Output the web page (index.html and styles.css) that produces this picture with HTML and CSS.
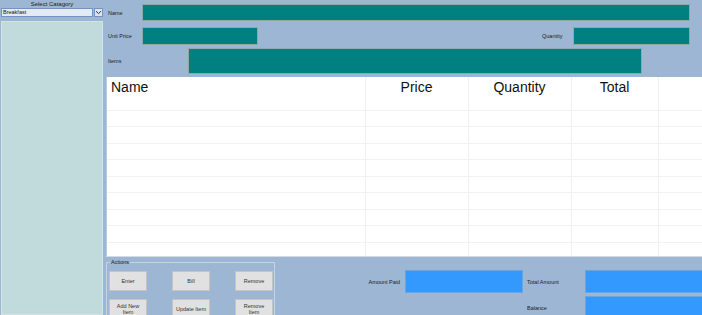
FILE: index.html
```html
<!DOCTYPE html>
<html>
<head>
  <title>Billing</title>
  <link rel="stylesheet" href="styles.css">
</head>
<body>
  <div class="app">
    <div class="side">
      <div class="side-title">Select Catagory</div>
      <div class="combo">
        <div class="combo-text">Breakfast</div>
        <div class="combo-btn">
          <svg width="7" height="5" viewBox="0 0 7 5"><path d="M1 1.2 L3.5 3.6 L6 1.2" fill="none" stroke="#333" stroke-width="1"/></svg>
        </div>
      </div>
      <div class="listbox"></div>
    </div>

    <div class="main">
      <div class="form-row row-name">
        <label class="lbl lbl-short">Name</label>
        <div class="tbox tbox-name"></div>
      </div>
      <div class="form-row row-price">
        <label class="lbl lbl-short">Unit Price</label>
        <div class="tbox tbox-price"></div>
        <label class="lbl lbl-qty">Quantity</label>
        <div class="tbox tbox-qty"></div>
      </div>
      <div class="form-row row-items">
        <label class="lbl lbl-items">Items</label>
        <div class="tbox tbox-items"></div>
      </div>

      <div class="grid-wrap">
        <table class="grid">
          <tr class="head"><th class="c-name">Name</th><th class="c-price">Price</th><th class="c-qty">Quantity</th><th class="c-total">Total</th><th class="c-rest"></th></tr>
          <tr><td></td><td></td><td></td><td></td><td></td></tr>
          <tr><td></td><td></td><td></td><td></td><td></td></tr>
          <tr><td></td><td></td><td></td><td></td><td></td></tr>
          <tr><td></td><td></td><td></td><td></td><td></td></tr>
          <tr><td></td><td></td><td></td><td></td><td></td></tr>
          <tr><td></td><td></td><td></td><td></td><td></td></tr>
          <tr><td></td><td></td><td></td><td></td><td></td></tr>
          <tr><td></td><td></td><td></td><td></td><td></td></tr>
          <tr><td></td><td></td><td></td><td></td><td></td></tr>
        </table>
      </div>

      <div class="bottom">
        <fieldset class="actions">
          <legend>Actions</legend>
          <div class="btn-grid">
            <button class="btn">Enter</button>
            <button class="btn">Bill</button>
            <button class="btn">Remove</button>
            <button class="btn btn-tall">Add New<br>Item</button>
            <button class="btn btn-tall">Update Item</button>
            <button class="btn btn-tall">Remove<br>Item</button>
          </div>
        </fieldset>
        <div class="pay">
          <label class="lbl pay-lbl-right">Amount Paid</label>
          <div class="bbox"></div>
          <label class="lbl">Total Amount</label>
          <div class="bbox"></div>
          <div></div>
          <div></div>
          <label class="lbl">Balance</label>
          <div class="bbox"></div>
        </div>
      </div>
    </div>
  </div>
</body>
</html>
```

FILE: styles.css
```css
html, body {
  margin: 0;
  padding: 0;
  width: 702px;
  height: 315px;
  overflow: hidden;
  background-color: #9cb6d3;
  font-family: "Liberation Sans", Arial, sans-serif;
}
.app {
  display: flex;
  height: 315px;
}

/* left category panel */
.side {
  width: 104px;
  flex-shrink: 0;
  display: flex;
  flex-direction: column;
}
.side-title {
  font-size: 6px;
  line-height: 8px;
  text-align: center;
  color: #222;
}
.combo {
  display: flex;
  margin: 0 1px 0 1px;
  height: 9px;
}
.combo-text {
  width: 92px;
  background-color: #e3eaf3;
  border: 1px solid #7393c0;
  font-size: 5.5px;
  line-height: 7px;
  padding-left: 1px;
  box-sizing: border-box;
  color: #111;
}
.combo-btn {
  width: 9px;
  margin-left: 1px;
  background-color: #dbe4ef;
  border: 1px solid #7393c0;
  box-sizing: border-box;
  display: flex;
  align-items: center;
  justify-content: center;
}
.listbox {
  flex: 1;
  margin: 4px 1px 0 1px;
  background-color: #c1dadb;
  border: 1px solid #d3e3e5;
}

/* main area */
.main {
  flex: 1;
  min-width: 0;
  display: flex;
  flex-direction: column;
  padding-left: 2px;
  overflow: hidden;
}
.main > * {
  flex-shrink: 0;
}
.form-row {
  display: flex;
  align-items: center;
  padding-left: 2px;
}
.lbl {
  font-size: 5.5px;
  color: #222;
  white-space: nowrap;
}
.lbl-short { width: 34px; }
.lbl-items { width: 80px; }
.lbl-qty { margin-left: auto; width: 31px; }
.tbox {
  background-color: #008080;
  border: 1px solid #8fa9a9;
  box-sizing: border-box;
}
.row-name { margin-top: 4px; }
.tbox-name { width: 548px; height: 17px; }
.row-price { margin-top: 6px; padding-right: 12px; }
.tbox-price { width: 116px; height: 18px; }
.tbox-qty { width: 117px; height: 18px; }
.row-items { margin-top: 3px; }
.tbox-items { width: 454px; height: 26px; }

/* items grid */
.grid-wrap {
  margin-top: 3px;
  height: 180px;
  overflow: hidden;
  background-color: #fff;
  border-left: 1px solid #b9cbe2;
  border-bottom: 1px solid #d4dbe4;
  box-sizing: border-box;
}
.grid {
  border-collapse: collapse;
  width: 596px;
  table-layout: fixed;
}
.grid th {
  height: 33px;
  padding: 2px 0 0 0;
  vertical-align: top;
  font-weight: normal;
  font-size: 14px;
  line-height: 16px;
  color: #111;
  border-right: 1px solid #f0f0f0;
  border-bottom: 1px solid #f2f2f2;
  box-sizing: border-box;
}
.grid td {
  height: 16.5px;
  padding: 0;
  border-right: 1px solid #f0f0f0;
  border-bottom: 1px solid #f2f2f2;
  box-sizing: border-box;
}
.c-name { width: 258px; text-align: left; padding-left: 4px !important; }
.c-price { width: 103px; }
.c-qty { width: 103px; }
.c-total { width: 87px; }
.c-rest { border-right: none !important; }

/* bottom section */
.bottom {
  display: flex;
  align-items: flex-start;
}
.actions {
  flex-shrink: 0;
  margin: 1px 0 0 0;
  padding: 5px 1px 0 2px;
  border: 1px solid #c6d3e4;
  border-bottom: none;
  width: 169px;
  box-sizing: border-box;
  height: 60px;
}
.actions legend {
  font-size: 5.5px;
  line-height: 8px;
  padding: 0 1px;
  margin-left: 1px;
  color: #222;
}
.btn-grid {
  display: grid;
  grid-template-columns: 38px 38px 38px;
  column-gap: 25px;
  row-gap: 8px;
}
.btn {
  height: 20px;
  padding: 0;
  margin: 0;
  background-color: #e1e1e1;
  border: 1px solid #c4c4c4;
  font-family: "Liberation Sans", Arial, sans-serif;
  font-size: 5.5px;
  line-height: 6px;
  color: #333;
}
.btn-tall {
  height: 20px;
}
.pay {
  flex-shrink: 0;
  display: grid;
  grid-template-columns: 126px 118px 54px 120px;
  column-gap: 4px;
  row-gap: 3px;
  margin-top: 13px;
  align-items: center;
}
.pay-lbl-right { text-align: right; padding-right: 1px; }
.bbox {
  height: 23px;
  background-color: #3399ff;
  border: 1px solid #6aa6e6;
  box-sizing: border-box;
}
```
